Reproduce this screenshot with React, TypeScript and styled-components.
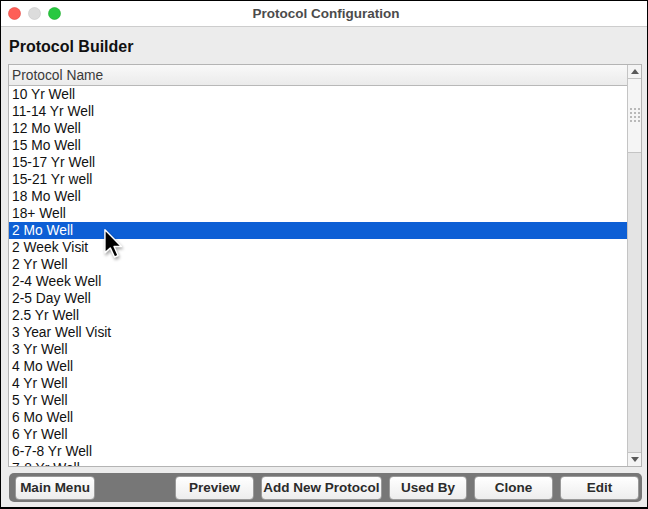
import React from 'react';
import styled, { createGlobalStyle } from 'styled-components';

const protocols = [
	'10 Yr Well',
	'11-14 Yr Well',
	'12 Mo Well',
	'15 Mo Well',
	'15-17 Yr Well',
	'15-21 Yr well',
	'18 Mo Well',
	'18+ Well',
	'2 Mo Well',
	'2 Week Visit',
	'2 Yr Well',
	'2-4 Week Well',
	'2-5 Day Well',
	'2.5 Yr Well',
	'3 Year Well Visit',
	'3 Yr Well',
	'4 Mo Well',
	'4 Yr Well',
	'5 Yr Well',
	'6 Mo Well',
	'6 Yr Well',
	'6-7-8 Yr Well',
	'7-8 Yr Well',
];

const SELECTED = '2 Mo Well';

const buttons = [
	{ label: 'Preview', width: 79 },
	{ label: 'Add New Protocol', width: 121 },
	{ label: 'Used By', width: 78 },
	{ label: 'Clone', width: 79 },
	{ label: 'Edit', width: 79 },
];

const GlobalStyle = createGlobalStyle`
	* { box-sizing: border-box; }
	body {
		margin: 0;
		background: #ffffff;
		font-family: 'Liberation Sans', Arial, sans-serif;
	}
`;

const TrafficLight = ({ color, border }: { color: string; border: string }) => (
	<svg width="13" height="13" viewBox="0 0 13 13">
		<circle cx="6.5" cy="6.5" r="6" fill={color} stroke={border} strokeWidth="0.6" />
	</svg>
);

const Cursor = () => (
	<svg width="24" height="32" viewBox="0 0 20 27">
		<path
			d="M1.5 1.5 L1.5 21 L6 16.8 L9.6 24.6 L12.6 23.2 L9.2 15.6 L15.4 15.6 Z"
			fill="#000"
			stroke="#fff"
			strokeWidth="1.2"
			strokeLinejoin="round"
		/>
	</svg>
);

const ArrowUp = () => (
	<svg width="8" height="5" viewBox="0 0 8 5">
		<path d="M0 5 L4 0 L8 5 Z" fill="#5a5a5a" />
	</svg>
);

const ArrowDown = () => (
	<svg width="8" height="5" viewBox="0 0 8 5">
		<path d="M0 0 L4 5 L8 0 Z" fill="#5a5a5a" />
	</svg>
);

const App = () => {
	return (
		<>
			<GlobalStyle />
			<Window>
				<TitleBar>
					<Lights>
						<TrafficLight color="#fe5f57" border="#e0443e" />
						<TrafficLight color="#dcdcdc" border="#c8c8c8" />
						<TrafficLight color="#28c840" border="#1aab29" />
					</Lights>
					<Title>Protocol Configuration</Title>
				</TitleBar>

				<Content>
					<Heading>Protocol Builder</Heading>

					<Table>
						<ListColumn>
							<HeaderCell>Protocol Name</HeaderCell>
							<Rows>
								{protocols.map((name) => (
									<Row key={name} selected={name === SELECTED}>
										{name}
										{name === SELECTED && (
											<CursorSpot>
												<Cursor />
											</CursorSpot>
										)}
									</Row>
								))}
							</Rows>
						</ListColumn>

						<ScrollBar>
							<ScrollButton>
								<ArrowUp />
							</ScrollButton>
							<Thumb>
								<Grip />
							</Thumb>
							<Track />
							<ScrollButton bottom>
								<ArrowDown />
							</ScrollButton>
						</ScrollBar>
					</Table>

					<ButtonBar>
						<Button width={80}>Main Menu</Button>
						<RightButtons>
							{buttons.map((b) => (
								<Button key={b.label} width={b.width}>
									{b.label}
								</Button>
							))}
						</RightButtons>
					</ButtonBar>
				</Content>
			</Window>
		</>
	);
};

export default App;

const Window = styled.div`
	width: 648px;
	height: 509px;
	border: 1px solid #000;
	border-bottom-width: 2px;
	background: #ececec;
	display: flex;
	flex-direction: column;
	overflow: hidden;
`;

const TitleBar = styled.div`
	position: relative;
	height: 26px;
	flex: none;
	background: #ffffff;
	border-bottom: 1px solid #cdcdcd;
	display: flex;
	align-items: center;
	justify-content: center;
`;

const Lights = styled.div`
	position: absolute;
	left: 7px;
	top: 6px;
	display: flex;
	gap: 7px;
	svg {
		display: block;
	}
`;

const Title = styled.div`
	font-size: 13.5px;
	font-weight: bold;
	color: #4b4b4b;
	margin-left: 4px;
`;

const Content = styled.div`
	flex: 1;
	display: flex;
	flex-direction: column;
	padding: 0 5px 0 7px;
`;

const Heading = styled.h1`
	margin: 11px 0 8px 1px;
	font-size: 16px;
	line-height: 18px;
	font-weight: bold;
	color: #111;
`;

const Table = styled.div`
	height: 403px;
	border: 1px solid #b4b4b4;
	background: #ffffff;
	display: grid;
	grid-template-columns: 1fr 14px;
	overflow: hidden;
`;

const ListColumn = styled.div`
	display: flex;
	flex-direction: column;
	min-width: 0;
	overflow: hidden;
`;

const HeaderCell = styled.div`
	height: 21px;
	flex: none;
	padding: 0 0 0 3px;
	display: flex;
	align-items: center;
	font-size: 13.8px;
	color: #3a3a3a;
	background: linear-gradient(#f9f9f9, #ebebeb);
	border-bottom: 1px solid #b8b8b8;
`;

const Rows = styled.div`
	flex: 1;
	overflow: hidden;
`;

const Row = styled.div<{ selected?: boolean }>`
	position: relative;
	height: 17px;
	line-height: 17px;
	padding-left: 3px;
	font-size: 13.8px;
	white-space: nowrap;
	color: ${(p) => (p.selected ? '#ffffff' : '#111111')};
	background: ${(p) => (p.selected ? '#0d5fd5' : 'transparent')};
`;

const CursorSpot = styled.span`
	position: absolute;
	left: 94px;
	top: 6px;
	z-index: 2;
	svg {
		display: block;
		filter: drop-shadow(1px 2px 1.5px rgba(0, 0, 0, 0.35));
	}
`;

const ScrollBar = styled.div`
	border-left: 1px solid #c4c4c4;
	background: #e6e6e6;
	display: flex;
	flex-direction: column;
`;

const ScrollButton = styled.div<{ bottom?: boolean }>`
	height: 14px;
	flex: none;
	display: flex;
	align-items: center;
	justify-content: center;
	background: #f4f4f4;
	${(p) =>
		p.bottom
			? 'border-top: 1px solid #c4c4c4;'
			: 'border-bottom: 1px solid #c4c4c4;'}
`;

const Thumb = styled.div`
	height: 74px;
	flex: none;
	background: #f5f5f5;
	border-bottom: 1px solid #c4c4c4;
	display: flex;
	align-items: center;
	justify-content: center;
`;

const Grip = styled.div`
	width: 11px;
	height: 17px;
	background-image: radial-gradient(#b9b9b9 0.8px, transparent 1px);
	background-size: 4px 4px;
`;

const Track = styled.div`
	flex: 1;
	background: #e4e4e4;
`;

const ButtonBar = styled.div`
	margin-top: 6px;
	height: 29px;
	margin-left: 1px;
	border-radius: 5px;
	background: #777777;
	display: flex;
	align-items: center;
	justify-content: space-between;
	padding: 0 3px 0 6px;
`;

const RightButtons = styled.div`
	display: flex;
	gap: 7px;
`;

const Button = styled.button<{ width: number }>`
	width: ${(p) => p.width}px;
	height: 24px;
	padding: 0;
	border: 1px solid #9a9a9a;
	border-radius: 4px;
	background: linear-gradient(#ffffff, #ededed);
	font-family: 'Liberation Sans', Arial, sans-serif;
	font-size: 13.5px;
	font-weight: bold;
	color: #2b2b2b;
	cursor: pointer;
`;
